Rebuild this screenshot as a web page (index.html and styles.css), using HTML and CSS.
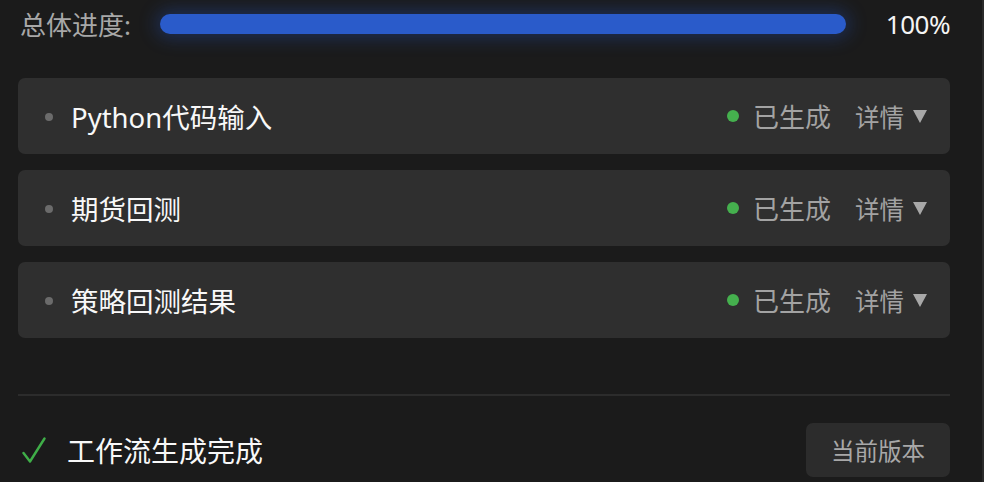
FILE: index.html
```html
<!DOCTYPE html>
<html lang="zh">
<head>
<meta charset="utf-8">
<link rel="stylesheet" href="styles.css">
</head>
<body>
<div class="page">
  <div class="progress-row">
    <span class="progress-label">总体进度:</span>
    <div class="progress-track"><div class="progress-fill" style="width:100%"></div></div>
    <span class="progress-value">100%</span>
  </div>

  <div class="steps">
    <div class="step">
      <span class="step-dot"></span>
      <span class="step-title">Python代码输入</span>
      <span class="step-status"><span class="status-dot"></span>已生成</span>
      <span class="step-detail">详情<svg class="caret" viewBox="0 0 12 11" width="14" height="13"><path d="M0 0 H12 L6 11 Z" fill="#a8a8a8"/></svg></span>
    </div>
    <div class="step">
      <span class="step-dot"></span>
      <span class="step-title">期货回测</span>
      <span class="step-status"><span class="status-dot"></span>已生成</span>
      <span class="step-detail">详情<svg class="caret" viewBox="0 0 12 11" width="14" height="13"><path d="M0 0 H12 L6 11 Z" fill="#a8a8a8"/></svg></span>
    </div>
    <div class="step">
      <span class="step-dot"></span>
      <span class="step-title">策略回测结果</span>
      <span class="step-status"><span class="status-dot"></span>已生成</span>
      <span class="step-detail">详情<svg class="caret" viewBox="0 0 12 11" width="14" height="13"><path d="M0 0 H12 L6 11 Z" fill="#a8a8a8"/></svg></span>
    </div>
  </div>

  <div class="divider"></div>

  <div class="footer">
    <div class="done">
      <svg class="check" viewBox="0 0 24 26" width="24" height="26"><path d="M1.5 16 L8 24.5 L22.5 1.5" fill="none" stroke="#3fae48" stroke-width="2.4" stroke-linecap="round" stroke-linejoin="round"/></svg>
      <span class="done-text">工作流生成完成</span>
    </div>
    <button class="version-btn">当前版本</button>
  </div>
</div>
</body>
</html>
```

FILE: styles.css
```css
* { box-sizing: border-box; }
html, body { margin: 0; padding: 0; height: 100%; }
body {
  background: #1b1b1b;
  font-family: "Noto Sans", "Noto Sans CJK SC", sans-serif;
  color: #f2f2f2;
  border-right: 2px solid #2a2a2a;
  overflow: hidden;
}
.page {
  width: 932px;
  margin-left: 18px;
}
.progress-row {
  height: 47px;
  display: flex;
  align-items: center;
}
.progress-label {
  font-size: 26px;
  color: #a8a8a8;
  padding-left: 2px;
  width: 142px;
  white-space: nowrap;
}
.progress-track {
  width: 686px;
  height: 20px;
  border-radius: 10px;
  background: #1f2a44;
  box-shadow: 0 0 18px 4px rgba(37, 87, 205, 0.33);
}
.progress-fill {
  height: 100%;
  border-radius: 10px;
  background: #2a5bca;
}
.progress-value {
  flex: 1;
  text-align: right;
  font-size: 26px;
  letter-spacing: -0.5px;
  color: #f4f4f4;
}
.steps {
  margin-top: 31px;
  display: flex;
  flex-direction: column;
  gap: 16px;
}
.step {
  height: 76px;
  background: #2f2f2f;
  border-radius: 7px;
  display: flex;
  align-items: center;
  padding: 0 23px 0 27px;
}
.step-dot {
  width: 8px;
  height: 8px;
  border-radius: 50%;
  background: #6b6b6b;
  margin-right: 18px;
  margin-top: 2px;
}
.step-title {
  flex: 1;
  font-size: 27.5px;
  color: #f8f8f8;
  white-space: nowrap;
}
.step-status {
  display: flex;
  align-items: center;
  font-size: 26px;
  color: #a3a3a3;
}
.status-dot {
  width: 12px;
  height: 12px;
  border-radius: 50%;
  background: #45b04e;
  margin-right: 14px;
}
.step-detail {
  display: flex;
  align-items: center;
  margin-left: 24px;
  font-size: 24.5px;
  color: #a3a3a3;
}
.caret { margin-left: 9px; margin-top: 1px; }
.divider {
  margin-top: 56px;
  height: 2px;
  background: #2c2c2c;
}
.footer {
  margin-top: 27px;
  display: flex;
  align-items: center;
  justify-content: space-between;
}
.done {
  display: flex;
  align-items: center;
}
.check { margin-left: 4px; margin-right: 21px; }
.done-text {
  font-size: 28px;
  color: #f8f8f8;
  white-space: nowrap;
}
.version-btn {
  width: 144px;
  height: 54px;
  border: none;
  border-radius: 7px;
  background: #2c2c2c;
  color: #a8a8a8;
  font-family: "Noto Sans CJK SC", sans-serif;
  font-size: 23.5px;
  padding: 0;
}
```
